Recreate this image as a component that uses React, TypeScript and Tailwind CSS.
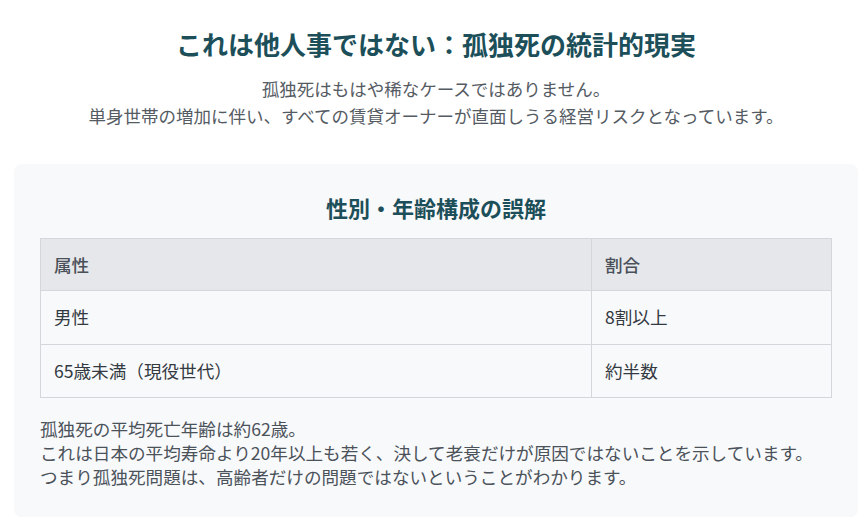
export default function App() {
    const rows = [
        { label: '男性', value: '8割以上' },
        { label: '65歳未満（現役世代）', value: '約半数' },
    ];

    return (
        <div className="bg-white pl-[14px] pr-[10px] pt-[27px] pb-[6px] font-['Noto_Sans_CJK_JP','Noto_Sans',sans-serif]">
            <h1 className="text-center text-[26px] leading-[34px] font-bold text-[#1c4f59]">
                これは他人事ではない：孤独死の統計的現実
            </h1>
            <p className="mt-[14px] text-center text-[17.5px] leading-[27px] text-[#555b63]">
                孤独死はもはや稀なケースではありません。
                <br />
                単身世帯の増加に伴い、すべての賃貸オーナーが直面しうる経営リスクとなっています。
            </p>

            <div className="mt-[35px] rounded-lg bg-[#f8f9fa] px-[26px] pt-[28px] pb-[28px]">
                <h2 className="text-center text-[22px] leading-[30px] font-bold text-[#1c4f59]">
                    性別・年齢構成の誤解
                </h2>
                <table className="mt-[16px] w-full border-collapse text-[17.6px] text-[#333a42]">
                    <thead>
                        <tr className="bg-[#e5e7ea]">
                            <th className="w-[551px] border border-[#d3d6da] px-[13px] py-[13px] text-left font-medium leading-[25px] text-[#4a5059]">
                                属性
                            </th>
                            <th className="border border-[#d3d6da] px-[13px] py-[13px] text-left font-medium leading-[25px] text-[#4a5059]">
                                割合
                            </th>
                        </tr>
                    </thead>
                    <tbody>
                        {rows.map((row) => (
                            <tr key={row.label}>
                                <td className="border border-[#d3d6da] px-[13px] py-[14px] leading-[24.5px]">{row.label}</td>
                                <td className="border border-[#d3d6da] px-[13px] py-[14px] leading-[24.5px]">{row.value}</td>
                            </tr>
                        ))}
                    </tbody>
                </table>
                <p className="mt-[19px] text-[17.6px] leading-[24px] text-[#4b525a]">
                    孤独死の平均死亡年齢は約62歳。
                    <br />
                    これは日本の平均寿命より20年以上も若く、決して老衰だけが原因ではないことを示しています。
                    <br />
                    つまり孤独死問題は、高齢者だけの問題ではないということがわかります。
                </p>
            </div>
        </div>
    );
}
